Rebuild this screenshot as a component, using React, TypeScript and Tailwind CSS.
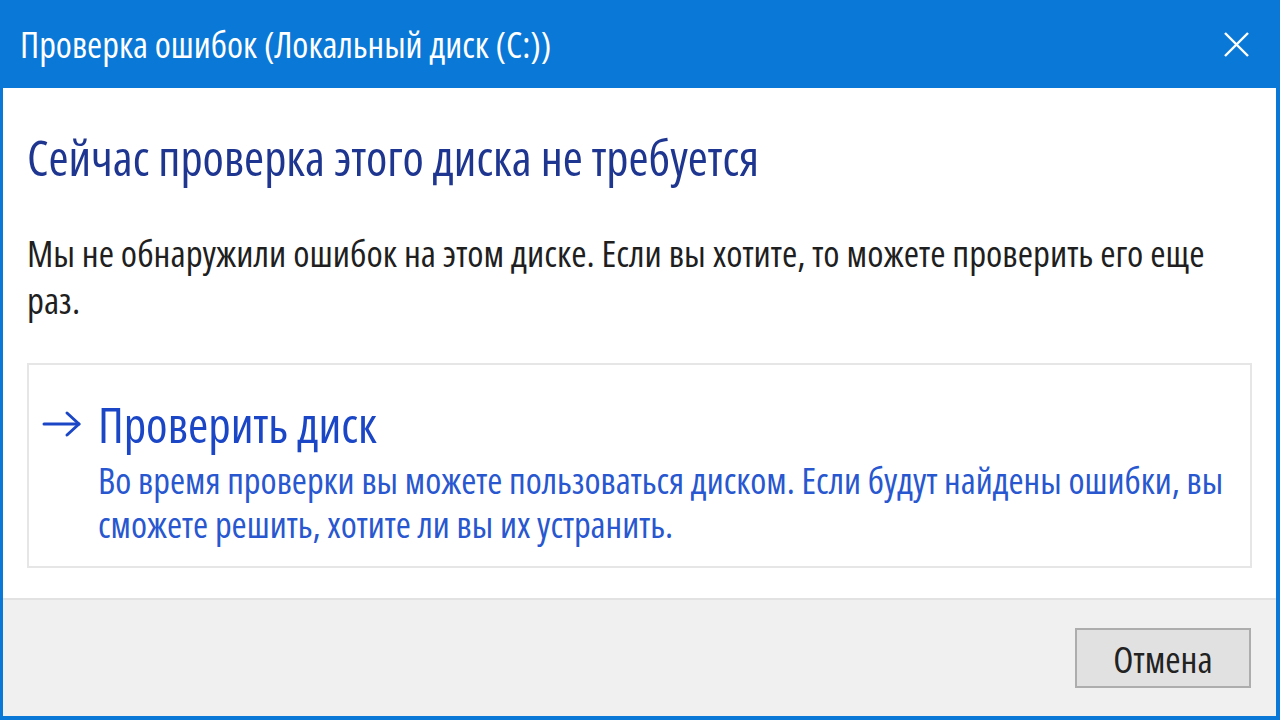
// Окно «Проверка ошибок» в стиле Windows 10
function CloseIcon() {
  return (
    <svg width="25" height="25" viewBox="0 0 25 25" fill="none" stroke="white" strokeWidth="2.4">
      <line x1="1" y1="1" x2="24" y2="24" />
      <line x1="24" y1="1" x2="1" y2="24" />
    </svg>
  );
}

function ArrowIcon() {
  return (
    <svg width="40" height="28" viewBox="0 0 40 28" fill="none" stroke="#1b47c6" strokeWidth="3" strokeLinecap="round" strokeLinejoin="round">
      <line x1="2" y1="14" x2="37" y2="14" />
      <polyline points="25,3 37,14 25,25" />
    </svg>
  );
}

export default function App() {
  return (
    <div className="w-[1280px] h-[720px] flex flex-col bg-[#0a78d7] pl-[3px] pr-[4px] pb-[4px] font-['Open_Sans',sans-serif] font-stretch-condensed overflow-hidden">
      {/* Title bar */}
      <div className="h-[88px] flex items-center justify-between pl-[17px] pr-[27px] shrink-0">
        <span className="text-white text-[36.5px] leading-none">Проверка ошибок (Локальный диск (C:))</span>
        <CloseIcon />
      </div>

      {/* Content */}
      <div className="bg-white px-[24px] pt-[41px] pb-[30px] flex flex-col">
        <h1 className="text-[#1e3690] text-[48.5px] leading-[56px] font-normal">
          Сейчас проверка этого диска не требуется
        </h1>
        <p className="mt-[44px] text-[#1f1f1f] text-[37px] leading-[47px]">
          Мы не обнаружили ошибок на этом диске. Если вы хотите, то можете проверить его еще раз.
        </p>

        <div className="mt-[40px] border-2 border-[#e6e6e6] pl-[13px] pr-[6px] pt-[31px] pb-[20px] flex gap-[14px]">
          <div className="w-[42px] h-[56px] flex items-center shrink-0">
            <ArrowIcon />
          </div>
          <div className="flex flex-col">
            <span className="text-[#1b47c6] text-[49px] leading-[56px]">Проверить диск</span>
            <span className="mt-[6px] text-[#2857cf] text-[36.5px] leading-[44px]">
              Во время проверки вы можете пользоваться диском. Если будут найдены ошибки, вы сможете решить, хотите ли вы их устранить.
            </span>
          </div>
        </div>
      </div>

      {/* Footer */}
      <div className="flex-1 bg-[#f0f0f0] border-t-2 border-[#e2e2e2] flex justify-end items-start pt-[28px] pr-[25px]">
        <button className="w-[176px] h-[60px] bg-[#e1e1e1] border-2 border-[#adadad] text-[#222] text-[37px] leading-none">
          Отмена
        </button>
      </div>
    </div>
  );
}
